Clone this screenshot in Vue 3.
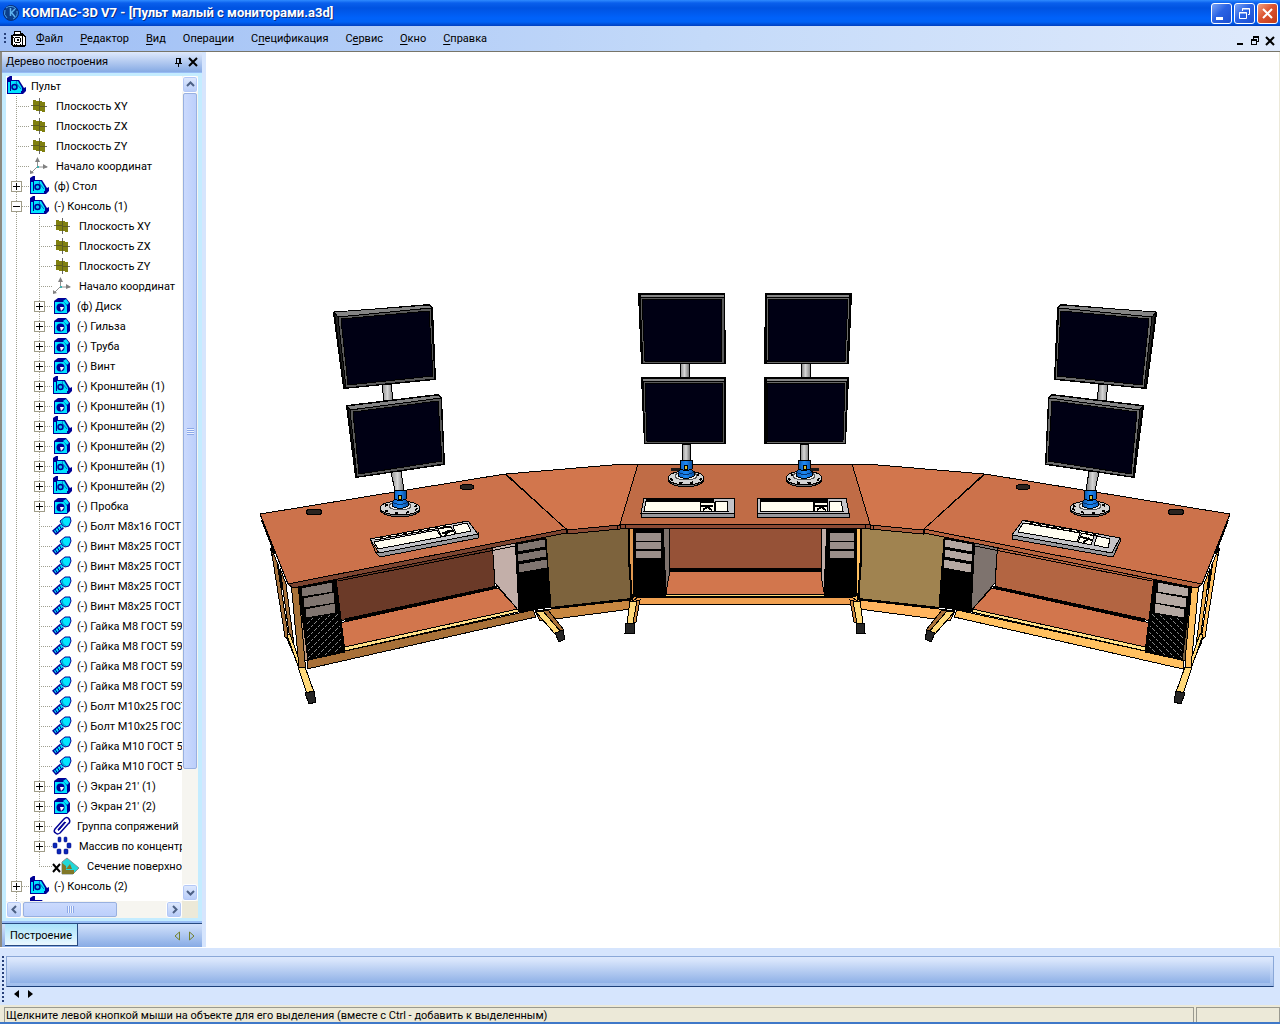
<template>
  <div class="app-window">
    <header class="title-bar">
      <svg class="app-logo" viewBox="0 0 18 18">
        <circle cx="9" cy="9" r="7.500" fill="#0b3f8c" stroke="#0a2f78" stroke-width="1" />
        <path d="M4 4a7 7 0 0 1 10 1M15 7a7 7 0 0 1-4 8M3 6a7 7 0 0 0 2 8" fill="none" stroke="#4ba0e8" />
        <path d="M8.500 4v8M9 9l4-4M9 8l4 5" fill="none" stroke="#5fb4f0" stroke-width="1.500" />
      </svg>
      <h1 class="title-text">КОМПАС-3D V7 - [Пульт малый с мониторами.a3d]</h1>
      <div class="window-buttons">
        <button class="window-button" aria-label="Свернуть">
          <svg viewBox="0 0 19 19"><path d="M4 13h7v3H4z" fill="#fff" /></svg>
        </button>
        <button class="window-button" aria-label="Восстановить">
          <svg viewBox="0 0 19 19" fill="none" stroke="#fff">
            <path d="M4.500 8.500h7v6h-7zM4 9h8" />
            <path d="M7.500 7V4.500h7v6H13M7 5h8" />
          </svg>
        </button>
        <button class="window-button close" aria-label="Закрыть">
          <svg viewBox="0 0 19 19"><path d="M5 5l9 9M14 5l-9 9" stroke="#fff" stroke-width="2" /></svg>
        </button>
      </div>
    </header>

    <nav class="menu-bar">
      <span class="grip"></span>
      <svg class="doc-icon" viewBox="0 0 16 16" shape-rendering="crispEdges">
        <path d="M3 0h7v2h2l3 4v8l-1 2H2l-2-2V4l3-1z" fill="#000" />
        <path d="M4 1h5v2H4zM2 5h9v9H2zM12 5l2 2v7h-2z" fill="#fff" />
        <circle cx="6.500" cy="9" r="3" fill="none" stroke="#000" />
        <path d="M6 8h2v2H6zM3 14h1v-1H3zM5 14h1v-1H5zM9 14h1v-1H9zM2 6h1v1H2z" fill="#000" />
      </svg>
      <button v-for="item in menu" :key="item.key + item.after" class="menu-item">
        {{ item.before }}<u>{{ item.key }}</u>{{ item.after }}
      </button>
      <div class="doc-buttons">
        <button class="doc-button" aria-label="Свернуть документ">
          <svg viewBox="0 0 10 10" shape-rendering="crispEdges"><path d="M2 7h6v2H2z" /></svg>
        </button>
        <button class="doc-button" aria-label="Восстановить документ">
          <svg viewBox="0 0 10 10" shape-rendering="crispEdges">
            <path d="M3 0h6v6H7V5h1V2H4v1H3zM1 3h6v6H1zM2 5v3h4V5z" fill-rule="evenodd" />
          </svg>
        </button>
        <button class="doc-button" aria-label="Закрыть документ">
          <svg viewBox="0 0 10 10"><path d="M1 1l8 8M9 1l-8 8" stroke="#000" stroke-width="2" /></svg>
        </button>
      </div>
    </nav>

    <main class="workspace">
      <aside class="tree-panel">
        <div class="panel-header">
          <h2 class="panel-title">Дерево построения</h2>
          <button class="panel-button" aria-label="Закрепить">
            <svg viewBox="0 0 10 10" shape-rendering="crispEdges">
              <path d="M2 1h6v5h1v1H6v3H5V7H2V6h1V1zM4 2v4h2V2z" fill-rule="evenodd" />
            </svg>
          </button>
          <button class="panel-button" aria-label="Закрыть панель">
            <svg viewBox="0 0 10 10"><path d="M1 1l8 8M9 1l-8 8" stroke="#000" stroke-width="2" /></svg>
          </button>
        </div>

        <div class="tree-frame">
          <ul class="tree">
            <li v-for="(node, i) in nodes" :key="i" class="tree-row">
              <span
                v-for="n in node.level"
                :key="n"
                class="guide"
                :class="{ branch: n === node.level, last: n === node.level && node.last }"
              >
                <button
                  v-if="n === node.level && node.toggle"
                  class="toggle"
                  :aria-label="node.toggle === '+' ? 'Развернуть' : 'Свернуть'"
                >
                  <svg viewBox="0 0 9 9" shape-rendering="crispEdges">
                    <path :d="node.toggle === '+' ? 'M1 4h7v1H1zM4 1h1v7H4z' : 'M1 4h7v1H1z'" />
                  </svg>
                </button>
              </span>
              <svg class="node-icon" :class="{ broad: node.icon === 'section' }">
                <use :href="'#icon-' + node.icon" />
              </svg>
              <span class="node-label" :class="{ shifted: node.shifted }">{{ node.text }}</span>
            </li>
          </ul>
          <div class="scroll vertical">
            <button class="scroll-button" aria-label="Вверх">
              <svg viewBox="0 0 9 9"><path d="M1 6l3.500-3.500L8 6" /></svg>
            </button>
            <div class="thumb"><i></i></div>
            <button class="scroll-button" aria-label="Вниз">
              <svg viewBox="0 0 9 9"><path d="M1 3l3.500 3.500L8 3" /></svg>
            </button>
          </div>
          <div class="scroll horizontal">
            <button class="scroll-button" aria-label="Влево">
              <svg viewBox="0 0 9 9"><path d="M6 1L2.500 4.500L6 8" /></svg>
            </button>
            <div class="thumb"><i></i></div>
            <button class="scroll-button" aria-label="Вправо">
              <svg viewBox="0 0 9 9"><path d="M3 1l3.500 3.500L3 8" /></svg>
            </button>
          </div>
          <div class="corner"></div>
        </div>

        <div class="tab-strip">
          <button class="tab">Построение</button>
          <div class="tab-arrows">
            <button aria-label="Предыдущая вкладка">
              <svg viewBox="0 0 6 10"><path d="M5.500 1v8L1 5z" /></svg>
            </button>
            <button aria-label="Следующая вкладка">
              <svg viewBox="0 0 6 10"><path d="M.5 1v8L5 5z" /></svg>
            </button>
          </div>
        </div>
      </aside>

      <section class="viewport">
        <svg class="scene" viewBox="206 52 1073 895" shape-rendering="crispEdges">
          <defs>
            <linearGradient id="pole">
              <stop offset="0" stop-color="#8a8a8a" />
              <stop offset="0.500" stop-color="#d6d6d6" />
              <stop offset="1" stop-color="#777" />
            </linearGradient>
            <linearGradient id="bracket">
              <stop offset="0" stop-color="#0b5fc0" />
              <stop offset="0.500" stop-color="#1e8af5" />
              <stop offset="1" stop-color="#0a4f9e" />
            </linearGradient>
            <pattern id="hatch" width="7" height="7" patternUnits="userSpaceOnUse">
              <rect width="7" height="7" fill="#000" />
              <path d="M0 7L7 0" stroke="#8a8a8a" stroke-width="1" stroke-dasharray="3 1" />
            </pattern>
          </defs>

          <!-- centre desk -->
          <g stroke="#000">
            <rect x="668" y="526" width="154" height="43" fill="#965237" />
            <path d="M669 571H821L825 594H666z" fill="#d2764d" />
            <path d="M668 569.500H822" stroke-width="3" />
            <path d="M633 597H857V604H633z" fill="#f0a050" />
            <path d="M664 594.500H826V596.500H664z" fill="#ffd97a" />
          </g>

          <!-- one wing of the console, drawn twice around x = 745 -->
          <g v-for="side in [0, 1]" :key="side" :transform="side ? 'matrix(-1 0 0 1 1490 0)' : null">
            <path d="M262 520L275 554M271 548L289 643L301 668M277 562L283 590" stroke="#000" stroke-width="2" fill="none" />
            <polygon
              v-for="(p, i) in wing"
              :key="i"
              :points="p[0]"
              :fill="p[1 + side] || p[1]"
              stroke="#000"
            />
            <path d="M345 620L497 587" stroke="#000" stroke-width="3" />
            <path d="M551 608L632 599" stroke="#000" stroke-width="2" />
            <path d="M338 581L515 546M566 534V529M617 529V525" stroke="#000" fill="none" />
            <path d="M629 529V560L632 600M635 529V595" stroke="#000" stroke-width="2" fill="none" />
            <g fill="#2b2420" stroke="#000">
              <ellipse cx="314" cy="512" rx="8" ry="3" />
              <ellipse cx="467" cy="487" rx="7" ry="3" />
            </g>
          </g>

          <g stroke="#000">
            <path d="M638 464H852L870 524H620z" fill="#c06c46" />
            <path d="M620 524H870V528H620zM625 524V528M865 524V528" fill="#8a4a34" />
            <path d="M671 469.500H682M808 469.500H819" stroke="#1c1816" stroke-width="3" />
          </g>

          <!-- stands and screens -->
          <g v-for="side in [0, 1]" :key="side" :transform="side ? 'matrix(-1 0 0 1 1490 0)' : null">
            <g v-for="s in stands" :key="s.x" stroke="#000">
              <polygon v-for="pole in s.poles" :key="pole" :points="pole" fill="url(#pole)" />
              <ellipse :cx="s.x" :cy="s.y + 1" :rx="s.r" ry="8" fill="#777" />
              <ellipse :cx="s.x" :cy="s.y" :rx="s.r" ry="7" fill="#d4d4d4" />
              <ellipse :cx="s.x" :cy="s.y" :rx="s.r - 3" ry="5" fill="none" stroke-dasharray="3 7" stroke-width="2" />
              <ellipse :cx="s.x" :cy="s.y - 2" rx="11" ry="4" fill="#eee" stroke="#555" />
              <g :transform="`translate(${s.x} ${s.y})`">
                <path d="M-8 -6L-5 -9H5L8 -6V-2Q0 3 -8 -2z" fill="url(#bracket)" />
                <path d="M-6 -18H6V-9Q0 -6 -6 -9z" fill="url(#bracket)" />
                <path d="M-8 -6Q0 -1 8 -6" fill="none" stroke="#06336e" />
                <rect x="-2" y="-13" width="3" height="4" fill="#d8c23a" />
              </g>
            </g>

            <g v-for="m in monitors" :key="m.outer">
              <polygon :points="m.outer" fill="#202020" stroke="#000" stroke-width="2" />
              <polygon :points="m.top" fill="#858585" stroke="#000" />
              <polygon :points="m.frame" :fill="side ? '#6b6b6b' : '#5a5a5a'" stroke="#000" />
              <polygon :points="m.screen" fill="#000014" stroke="#000" />
            </g>
          </g>

          <g v-for="k in keyboards" :key="k.body" stroke="#000">
            <polygon :points="k.side" fill="#98989c" />
            <polygon :points="k.body" fill="#c4c4c8" />
            <polygon v-for="area in k.areas" :key="area" :points="area" fill="#fffdf0" />
            <polygon :points="k.arrows" fill="#fffdf0" />
            <path :d="k.lines" fill="none" stroke-width="2" />
            <path :d="k.row" fill="none" stroke-width="3" />
            <path v-if="k.tilted" :d="k.row" fill="none" stroke="#fffdf0" stroke-dasharray="5 3" />
          </g>
        </svg>
      </section>
    </main>

    <section class="property-bar">
      <span class="property-grip"></span>
      <div class="property-body">
        <div class="property-strip"></div>
        <div class="property-arrows">
          <button aria-label="Назад"><svg viewBox="0 0 5 8"><path d="M5 0v8L0 4z" /></svg></button>
          <button aria-label="Вперёд"><svg viewBox="0 0 5 8"><path d="M0 0v8l5-4z" /></svg></button>
        </div>
      </div>
    </section>

    <footer class="status-bar">
      <p class="status-field message">
        Щелкните левой кнопкой мыши на объекте для его выделения (вместе с Ctrl - добавить к выделенным)
      </p>
      <p class="status-field extra"></p>
    </footer>

    <!-- tree icons -->
    <svg class="symbols" aria-hidden="true">
      <symbol id="icon-assembly" viewBox="0 0 20 20">
        <path d="M1 2l3-2h2v4h7l5 8 2-1v4l-3 3H1z" fill="#000096" />
        <path d="M2 6h2v9h11v2H2z" fill="#00e5ff" />
        <path d="M5 5h7l4 7v3H5z" fill="#00e5ff" />
        <path d="M11 5l-1 2 5 6" fill="none" stroke="#0070b8" />
        <circle cx="8.500" cy="11" r="2.500" fill="#00c8f0" stroke="#000096" stroke-width="1.500" />
      </symbol>
      <symbol id="icon-part" viewBox="0 0 20 20">
        <path d="M2 5l4-3h8l4 5v8l-3 3H2z" fill="#000096" />
        <path d="M3 6h9l3 4v7H3z" fill="#00e5ff" />
        <path d="M11 5l3-2 3 4-2 2z" fill="#00e5ff" />
        <circle cx="8.500" cy="11.500" r="4" fill="#000096" />
        <path d="M8 11h4l-1 2-2 2z" fill="#fff" />
      </symbol>
      <symbol id="icon-bolt" viewBox="0 0 20 20">
        <path d="M2 17l8-7" stroke="#000096" stroke-width="6" />
        <path d="M3 16l8-7" stroke="#00e5ff" stroke-width="3" />
        <path d="M3 13l3 5M5 11l3 5M7 9l3 5" stroke="#000096" />
        <path d="M8 5l5-4h5l1 4-2 5-4 1-3-2z" fill="#00e5ff" stroke="#000096" />
        <path d="M10 4l1 4 3 2" fill="none" stroke="#0098c8" />
      </symbol>
      <symbol id="icon-plane" viewBox="0 0 20 20" shape-rendering="crispEdges">
        <path d="M4 4l12 2v10L4 14z" fill="#808010" />
        <path d="M10.500 2v16M2 9.500h4M14 10.500h4" stroke="#686868" />
        <path d="M4 9.500h6M10 10.500h6M10.500 5v10" stroke="#5c5c20" />
      </symbol>
      <symbol id="icon-origin" viewBox="0 0 20 20">
        <path d="M8.500 3v8H18M8 11l-5 5" fill="none" stroke="#909090" />
        <path d="M6 6h5L8.500 1zM14 8l5 3-5 2zM1 18v-4l4 3z" fill="#808080" />
        <path d="M8 10h2v2H8z" fill="#40b0b0" />
      </symbol>
      <symbol id="icon-mates" viewBox="0 0 20 20">
        <path
          d="M6 14l7-8M4 17Q1 16 3 13L12 3q3-3 5 0t-1 5L8 17q-3 2-4 0"
          fill="none"
          stroke="#000096"
          stroke-width="1.500"
        />
        <path d="M6 14q1 1 2-1l6-7" fill="none" stroke="#000096" />
      </symbol>
      <symbol id="icon-array" viewBox="0 0 20 20">
        <g fill="#0a28b8" stroke="#000080" stroke-width="0.500">
          <rect x="6" y="1" width="3" height="5" rx="1" /><rect x="12" y="1" width="3" height="5" rx="1" />
          <rect x="1" y="7" width="4" height="5" rx="1" /><rect x="15" y="7" width="4" height="5" rx="1" />
          <rect x="5" y="13" width="4" height="5" rx="1" /><rect x="12" y="13" width="4" height="5" rx="1" />
        </g>
      </symbol>
      <symbol id="icon-section" viewBox="0 0 30 20">
        <path d="M1 8l7 8M8 8l-7 8" stroke="#000" stroke-width="2" />
        <path d="M10 6l5-4 12 10-6 6H10z" fill="#20d8d8" stroke="#809090" />
        <path d="M10 7l4 3v4h8v4H10z" fill="#807828" />
        <path d="M14 13l4-5 2 5z" fill="#807828" />
      </symbol>
    </svg>
  </div>
</template>

<script setup>
const menu = [
  { before: '', key: 'Ф', after: 'айл' },
  { before: '', key: 'Р', after: 'едактор' },
  { before: '', key: 'В', after: 'ид' },
  { before: 'Опера', key: 'ц', after: 'ии' },
  { before: 'С', key: 'п', after: 'ецификация' },
  { before: 'С', key: 'е', after: 'рвис' },
  { before: '', key: 'О', after: 'кно' },
  { before: '', key: 'С', after: 'правка' }
]

const node = (level, icon, text, toggle = '', extra = {}) => ({ level, icon, text, toggle, ...extra })

const basePlanes = (level) => [
  node(level, 'plane', 'Плоскость XY', '', { shifted: true }),
  node(level, 'plane', 'Плоскость ZX', '', { shifted: true }),
  node(level, 'plane', 'Плоскость ZY', '', { shifted: true }),
  node(level, 'origin', 'Начало координат', '', { shifted: true })
]

const bolts = [
  '(-) Болт М8х16 ГОСТ',
  '(-) Винт М8х25 ГОСТ',
  '(-) Винт М8х25 ГОСТ',
  '(-) Винт М8х25 ГОСТ',
  '(-) Винт М8х25 ГОСТ',
  '(-) Гайка М8 ГОСТ 59',
  '(-) Гайка М8 ГОСТ 59',
  '(-) Гайка М8 ГОСТ 59',
  '(-) Гайка М8 ГОСТ 59',
  '(-) Болт М10х25 ГОСТ',
  '(-) Болт М10х25 ГОСТ',
  '(-) Гайка М10 ГОСТ 5',
  '(-) Гайка М10 ГОСТ 5'
]

const nodes = [
  node(0, 'assembly', 'Пульт'),
  ...basePlanes(1),
  node(1, 'assembly', '(ф) Стол', '+'),
  node(1, 'assembly', '(-) Консоль (1)', '-'),
  ...basePlanes(2),
  node(2, 'part', '(ф) Диск', '+'),
  node(2, 'part', '(-) Гильза', '+'),
  node(2, 'part', '(-) Труба', '+'),
  node(2, 'part', '(-) Винт', '+'),
  node(2, 'assembly', '(-) Кронштейн (1)', '+'),
  node(2, 'part', '(-) Кронштейн (1)', '+'),
  node(2, 'assembly', '(-) Кронштейн (2)', '+'),
  node(2, 'part', '(-) Кронштейн (2)', '+'),
  node(2, 'assembly', '(-) Кронштейн (1)', '+'),
  node(2, 'assembly', '(-) Кронштейн (2)', '+'),
  node(2, 'part', '(-) Пробка', '+'),
  ...bolts.map((text) => node(2, 'bolt', text)),
  node(2, 'part', "(-) Экран 21' (1)", '+'),
  node(2, 'part', "(-) Экран 21' (2)", '+'),
  node(2, 'mates', 'Группа сопряжений', '+'),
  node(2, 'array', 'Массив по концентр', '+', { shifted: true }),
  node(2, 'section', 'Сечение поверхно', '', { last: true }),
  node(1, 'assembly', '(-) Консоль (2)', '+'),
  node(1, 'assembly', '', '')
]

// points, left fill, right fill
const wing = [
  // rear and middle posts of the outer frame
  ['271,548 277,562 289,640 285,637', '#a5713c', '#ffc060'],
  ['280,568 286,584 294,645 290,640', '#a5713c', '#f0b050'],
  ['287,635 290,634 300,662 298,666', '#ffd97a'],
  // back panel and floor
  ['325,570 492,536 495,587 335,622', '#6b3a28', '#b36542'],
  ['335,624 498,588 519,610 340,650', '#d2764d', '#d2764d'],
  // lower beams
  ['307,660 345,651 533,610 536,617 307,669', '#a87038', '#ffc060'],
  ['340,648 518,609 518,612 340,652', '#ffe08a'],
  ['535,611 551,609 631,600 631,609 540,621', '#c88740', '#ffb45e'],
  ['545,525 567,524 629,520 632,599 551,608', '#7d633d', '#a08350'],
  // cabinet beside the corner
  ['492,540 515,536 519,611 495,583', '#c3afa9', '#7e736e'],
  ['515,536 545,530 551,607 519,612', '#000'],
  ['517,544 545,539 546,547 518,552', '#807570', '#b5a8a2'],
  ['517,554 546,549 546,557 518,562', '#807570', '#b5a8a2'],
  ['518,564 547,559 547,568 519,573', '#807570', '#b5a8a2'],
  // outer cabinet
  ['293,578 299,578 308,660 304,660', '#c09a80', '#7a6040'],
  ['297,578 335,570 345,652 308,660', '#000'],
  ['305,619 338,613 344,651 308,659', 'url(#hatch)'],
  ['301,588 332,582 333,592 302,597', '#807570', '#b5a8a2'],
  ['303,598 334,592 335,603 304,608', '#807570', '#b5a8a2'],
  ['305,609 335,603 336,613 306,618', '#807570', '#b5a8a2'],
  // front post and feet
  ['291,582 298,582 305,662 305,667 299,667', '#a87238', '#ffc060'],
  ['298,667 305,667 314,692 307,694', '#ffd97a'],
  ['305,693 314,691 316,702 309,704', '#262626'],
  ['542,611 548,610 564,630 560,633', '#a87038', '#a87038'],
  ['535,611 543,611 561,632 555,634', '#ffd97a'],
  ['555,633 563,630 565,639 559,642', '#262626'],
  // centre cabinet, its post and foot
  ['629,524 634,524 637,598 631,602', '#e09850', '#ffc060'],
  ['633,524 663,524 666,596 634,597', '#000'],
  ['663,524 669,524 669,576 666,592', '#7e736e', '#c0aea8'],
  ['634,532 661,532 661,541 634,541', '#9b8f8a'],
  ['634,541 661,541 661,549 634,549', '#9b8f8a'],
  ['634,550 661,550 661,558 634,558', '#9b8f8a'],
  ['636,601 640,600 636,622 633,623', '#c88740'],
  ['630,601 637,601 633,623 627,623', '#ffd97a'],
  ['626,623 634,623 634,633 625,633', '#262626'],
  // table tops
  ['506,474 600,466 624,464 638,464 620,525 567,530', '#d2764d'],
  ['567,530 620,525 620,529 567,534', '#8a4a34', '#a85c3c'],
  ['288,584 566,529 566,533 293,588', '#7c4430', '#b5633f'],
  ['260,514 505,474 566,529 288,584', '#cc724b']
]

const stands = [
  { x: 400, y: 508, r: 20, poles: ['382,384 391,384 393,400 384,401', '391,472 401,471 404,491 395,491'] },
  { x: 686, y: 478, r: 18, poles: ['680,363 689,363 689,378 680,378', '682,444 690,444 690,462 682,462'] }
]

const monitors = [
  {
    outer: '334,313 429,305 432,308 435,379 344,388',
    top: '334,312 429,305 432,308 338,317',
    frame: '338,317 431,308 435,379 346,388',
    screen: '341,319 429,311 433,376 348,385'
  },
  {
    outer: '347,406 438,395 441,398 444,464 356,477',
    top: '347,406 438,395 441,398 350,410',
    frame: '350,410 441,398 444,464 357,477',
    screen: '353,412 438,401 442,461 359,474'
  },
  {
    outer: '639,294 724,294 725,363 642,363',
    top: '639,294 724,294 724,297 641,297',
    frame: '640,297 724,297 724,363 643,363',
    screen: '642,299 721,299 722,361 645,361'
  },
  {
    outer: '642,378 725,378 725,443 645,443',
    top: '642,378 724,378 724,381 643,381',
    frame: '643,381 724,381 724,443 645,443',
    screen: '645,383 722,383 723,441 647,441'
  }
]

const keyboards = [
  {
    tilted: true,
    side: '370,539 376,553 478,533 478,538 380,557 376,553',
    body: '370,539 468,521 478,534 379,553',
    areas: ['374,542 437,530 441,537 378,549', '453,526 467,523 471,531 456,534'],
    arrows: '438,529 451,527 455,534 442,537',
    lines: 'M442 533L453 531M444 537L449 530',
    row: 'M375 539L451 525'
  },
  {
    side: '641,513 734,513 734,517 641,517',
    body: '644,498 734,498 734,513 641,513',
    areas: ['646,501 700,501 700,511 644,511', '715,501 727,501 728,511 715,511'],
    arrows: '700,502 714,502 714,511 700,511',
    lines: 'M701 505.500H713M703 510L707 507L712 510',
    row: 'M646 500H714'
  },
  {
    side: '757,513 849,513 849,517 757,517',
    body: '757,498 846,498 849,513 757,513',
    areas: ['760,501 813,501 814,511 760,511', '829,501 841,501 843,511 829,511'],
    arrows: '814,502 827,502 828,511 815,511',
    lines: 'M815 505.500H827M817 510L821 507L826 510',
    row: 'M760 500H828'
  },
  {
    tilted: true,
    side: '1012,535 1112,553 1120,538 1120,542 1113,557 1012,539',
    body: '1023,520 1120,538 1112,553 1012,535',
    areas: ['1023,523 1080,533 1077,542 1018,532', '1097,536 1110,539 1108,548 1094,545'],
    arrows: '1082,533 1094,536 1091,545 1078,542',
    lines: 'M1081 537L1092 540M1083 543L1089 538',
    row: 'M1025 522L1098 535'
  }
]
</script>

<style>
body {
  margin: 0;
}
</style>

<style scoped>
.app-window {
  display: flex;
  flex-direction: column;
  min-height: 100vh;
  background: #d6e5fd;
  color: #000;
  font-family: Tahoma, Roboto, sans-serif;
  font-size: 11px;
  line-height: 16px;
}

button {
  margin: 0;
  padding: 0;
  border: 0;
  background: none;
  color: inherit;
  font: inherit;
}

svg {
  display: block;
}

h1,
h2,
p,
ul {
  margin: 0;
  padding: 0;
}

.symbols {
  position: absolute;
  width: 0;
  height: 0;
}

/* title bar */
.title-bar {
  display: flex;
  align-items: center;
  height: 26px;
  padding: 0 2px;
  background: linear-gradient(#2f8bff 0, #0a5fec 3px, #0053e1 8px, #0062fa 18px, #0062f5 22px, #0040c0 26px);
}

.app-logo {
  width: 18px;
  height: 18px;
}

.title-text {
  flex: 1;
  margin-left: 2px;
  color: #fff;
  font: bold 13px/20px "Trebuchet MS", Roboto, sans-serif;
  text-shadow: 1px 1px #0a2a80;
}

.window-buttons {
  display: flex;
  gap: 2px;
}

.window-button {
  width: 21px;
  height: 21px;
  border: 1px solid #fff;
  border-radius: 3px;
  background: linear-gradient(135deg, #7ba4f5, #2a63e4 45%, #1c4fd0);
}

.window-button.close {
  background: linear-gradient(135deg, #f0a080, #dc5430 45%, #c03a18);
}

/* menu */
.menu-bar {
  display: flex;
  align-items: center;
  height: 25px;
  padding: 0 5px 0 4px;
  background: linear-gradient(90deg, #9ebef5, #c4daf9 55%, #dfeafc);
}

.grip {
  width: 2px;
  height: 11px;
  background: repeating-linear-gradient(#27407a 0 2px, transparent 2px 4px);
}

.doc-icon {
  width: 16px;
  height: 16px;
  margin: 0 9px 0 5px;
}

.menu-item {
  margin-right: 17px;
}

.menu-item u {
  text-underline-offset: 2px;
}

.doc-buttons {
  display: flex;
  gap: 5px;
  margin-left: auto;
  padding-top: 4px;
}

.doc-button,
.doc-button svg {
  width: 10px;
  height: 10px;
}

/* workspace */
.workspace {
  flex: 1;
  display: flex;
  border-top: 1px solid #77756a;
}

.tree-panel {
  display: flex;
  flex-direction: column;
  width: 200px;
  border-left: 2px solid #8c8a80;
  border-right: 4px solid #d6e5fd;
  background: #98bcf4;
}

.panel-header {
  display: flex;
  align-items: center;
  gap: 5px;
  height: 20px;
  padding: 0 4px;
  background: linear-gradient(#dfe9fc, #86aae4);
}

.panel-title {
  flex: 1;
  font: inherit;
}

.panel-button,
.panel-button svg {
  width: 10px;
  height: 10px;
}

.tree-frame {
  flex: 1;
  display: grid;
  grid-template: minmax(0, 1fr) 17px / minmax(0, 1fr) 16px;
  border: solid #c4ecff;
  border-width: 3px 4px 3px 4px;
  margin: 1px 0 2px;
  background: #fff;
}

.tree {
  height: 0;
  min-height: 100%;
  overflow: hidden;
  list-style: none;
}

.tree-row {
  display: flex;
  align-items: center;
  height: 20px;
  white-space: nowrap;
}

.guide {
  position: relative;
  flex: none;
  width: 23px;
  height: 20px;
  background: repeating-linear-gradient(#a0a090 0 1px, transparent 1px 2px) 10px 0 / 1px 100% no-repeat;
}

.guide.branch {
  background:
    repeating-linear-gradient(#a0a090 0 1px, transparent 1px 2px) 10px 0 / 1px 100% no-repeat,
    repeating-linear-gradient(90deg, #a0a090 0 1px, transparent 1px 2px) 10px 10px / 13px 1px no-repeat;
}

.guide.last {
  background-size: 1px 50%, 13px 1px;
}

.toggle {
  position: absolute;
  top: 5px;
  left: 5px;
  width: 11px;
  height: 11px;
  border: 1px solid #a09c88;
  background: #fff;
}

.node-icon {
  flex: none;
  width: 20px;
  height: 20px;
}

.node-icon.broad {
  width: 30px;
}

.node-label {
  margin-left: 5px;
  padding-top: 2px;
}

.node-label.shifted {
  margin-left: 7px;
}

.scroll {
  display: flex;
  background: #f6f5f0;
}

.vertical {
  flex-direction: column;
}

.scroll-button {
  display: flex;
  flex: none;
  align-items: center;
  justify-content: center;
  width: 16px;
  height: 17px;
  border: 1px solid #fff;
  border-radius: 3px;
  background: linear-gradient(#e0eafe, #b6cbf8);
  box-shadow: inset 0 0 0 1px #b4c8f6;
}

.scroll-button svg {
  flex: none;
  width: 9px;
  height: 9px;
  fill: none;
  stroke: #4d6185;
  stroke-width: 2;
}

.thumb {
  display: flex;
  align-items: center;
  justify-content: center;
  border: 1px solid #98b0e0;
  border-radius: 2px;
}

.vertical .thumb {
  width: 12px;
  height: 674px;
  margin: 0 1px auto;
  background: linear-gradient(90deg, #cbdafd, #bccffb);
}

.thumb i {
  width: 7px;
  height: 7px;
  background: repeating-linear-gradient(#8ca8e8 0 1px, #eef4fe 1px 2px);
}

.horizontal .thumb {
  width: 92px;
  height: 13px;
  margin: 1px auto 1px 1px;
  background: linear-gradient(#cbdafd, #bccffb);
}

.horizontal .thumb i {
  background: repeating-linear-gradient(90deg, #8ca8e8 0 1px, #eef4fe 1px 2px);
}

.corner {
  background: #ece9d8;
}

.tab-strip {
  display: flex;
  height: 23px;
  padding-left: 3px;
  border-top: 1px solid #274a80;
  background: linear-gradient(#d3e2fb, #87abe5);
}

.tab {
  height: 22px;
  padding: 2px 5px 0;
  border: solid #274a80;
  border-width: 0 1px 1px 0;
  background: linear-gradient(#a8e2fa, #eaf8ff);
}

.tab-arrows {
  display: flex;
  align-items: center;
  gap: 9px;
  margin: 0 7px 0 auto;
}

.tab-arrows svg {
  width: 6px;
  height: 10px;
  fill: none;
  stroke: #74802c;
}

.viewport {
  flex: 1;
  min-width: 0;
  border-right: 1px solid #ece9d8;
  background: #fff;
}

.scene {
  width: 100%;
}

/* property bar */
.property-bar {
  display: flex;
  height: 49px;
  padding: 8px 6px 0 2px;
  border-top: 1px solid #fff;
}

.property-grip {
  width: 2px;
  height: 47px;
  background: repeating-linear-gradient(#27407a 0 2px, transparent 2px 4px);
}

.property-body {
  flex: 1;
  margin-left: 2px;
}

.property-strip {
  height: 29px;
  border: 1px solid #8aa8d8;
  border-bottom-color: #1d3f78;
  background: linear-gradient(#e2ecfe, #86aae4);
  box-shadow: inset 0 0 0 3px #d6e5fd55;
}

.property-arrows {
  display: flex;
  gap: 9px;
  padding: 3px 8px;
}

.property-arrows svg {
  width: 5px;
  height: 8px;
}

/* status bar */
.status-bar {
  display: flex;
  gap: 2px;
  height: 15px;
  padding: 2px 0 0 4px;
  border-bottom: 2px solid #3f78c8;
  background: #ece9d8;
}

.status-field {
  box-sizing: border-box;
  height: 15px;
  border: solid #9a9a90;
  border-width: 1px 1px 0;
  padding-left: 1px;
}

.message {
  flex: 1;
}

.extra {
  width: 84px;
}
</style>
